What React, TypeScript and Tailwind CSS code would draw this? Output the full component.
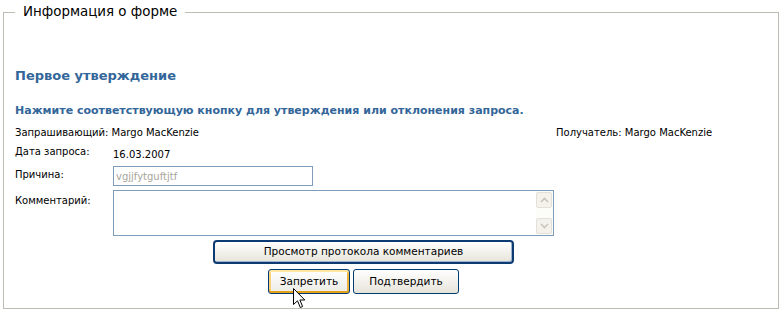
const ui = "font-['DejaVu_Sans',sans-serif]";

function ScrollButton({ up }: { up: boolean }) {
  return (
    <div className="w-[16px] h-[16px] rounded-[2px] border border-[#e3e1d7] bg-[#f3f2ec] flex items-center justify-center">
      <svg width="9" height="6" viewBox="0 0 9 6">
        <path
          d={up ? "M1 5 L4.5 1.5 L8 5" : "M1 1 L4.5 4.5 L8 1"}
          fill="none"
          stroke="#c8c6bb"
          strokeWidth="1.6"
        />
      </svg>
    </div>
  );
}

function Cursor() {
  return (
    <svg className="absolute left-[293px] top-[288px]" width="13" height="21" viewBox="0 0 13 21">
      <path
        d="M0.5 0.5 L0.5 16.5 L4.5 12.8 L7.3 19.5 L9.6 18.5 L6.9 12 L11.8 12 Z"
        fill="#fff"
        stroke="#000"
        strokeWidth="1"
        strokeLinejoin="miter"
      />
    </svg>
  );
}

export default function App() {
  return (
    <div className={`relative w-[780px] h-[313px] bg-white p-[3px] ${ui}`}>
      <fieldset className="w-[776px] h-[306px] border border-[#bdbdb4] px-[11px]">
        <legend className="px-[8px] text-[13.4px] leading-[18px] text-black">
          Информация о форме
        </legend>

        {/* heading */}
        <h2 className="mt-[46px] text-[13px] font-bold leading-[18px] text-[#336699]">
          Первое утверждение
        </h2>
        <p className="mt-[18px] text-[11px] font-bold leading-[16px] text-[#336699]">
          Нажмите соответствующую кнопку для утверждения или отклонения запроса.
        </p>

        {/* requester / recipient */}
        <div className="mt-[7px] flex text-[10px] leading-[14px] text-black">
          <div className="w-[541px]">Запрашивающий: Margo MacKenzie</div>
          <div>Получатель: Margo MacKenzie</div>
        </div>

        <div className="mt-[5px] flex text-[10px] leading-[14px] text-black">
          <div className="w-[98px]">Дата запроса:</div>
          <div className="pt-[3px]">16.03.2007</div>
        </div>

        <div className="mt-[4px] flex items-center text-[10px] leading-[14px] text-black">
          <div className="w-[98px] pb-[2px]">Причина:</div>
          <input
            readOnly
            value="vgjjfytguftjtf"
            className="w-[200px] h-[20px] border border-[#7f9db9] px-[2px] text-[10px] text-[#a7a69c] outline-none"
          />
        </div>

        <div className="mt-[4px] flex text-[10px] leading-[14px] text-black">
          <div className="w-[98px] pt-[4px]">Комментарий:</div>
          <div className="w-[441px] h-[46px] border border-[#7f9db9] flex bg-white">
            <textarea className="flex-1 resize-none outline-none" />
            <div className="w-[17px] py-[1px] pr-[1px] flex flex-col justify-between bg-[#fcfcf9]">
              <ScrollButton up />
              <ScrollButton up={false} />
            </div>
          </div>
        </div>

        {/* actions */}
        <div className="ml-[198px] mt-[4px] w-[301px] flex flex-col items-center gap-[5px] text-[10.5px] text-black">
          <button className="w-[301px] h-[24px] rounded-[4px] border-2 border-[#0b3b72] bg-linear-to-b from-white to-[#e6e4da] shadow-[inset_-1px_-1px_0_#9fb3d0]">
            Просмотр протокола комментариев
          </button>
          <div className="flex gap-[3px]">
            <button className="w-[82px] h-[25px] rounded-[3px] border border-[#003c74] bg-linear-to-b from-white to-[#ecebe4] shadow-[inset_0_2px_0_#ffe7a2,inset_0_-2px_0_#e5a01a,inset_2px_0_0_#fbd27a,inset_-2px_0_0_#f0b33c]">
              Запретить
            </button>
            <button className="w-[106px] h-[25px] rounded-[3px] border border-[#003c74] bg-linear-to-b from-white to-[#e6e4da]">
              Подтвердить
            </button>
          </div>
        </div>
      </fieldset>
      <Cursor />
    </div>
  );
}
